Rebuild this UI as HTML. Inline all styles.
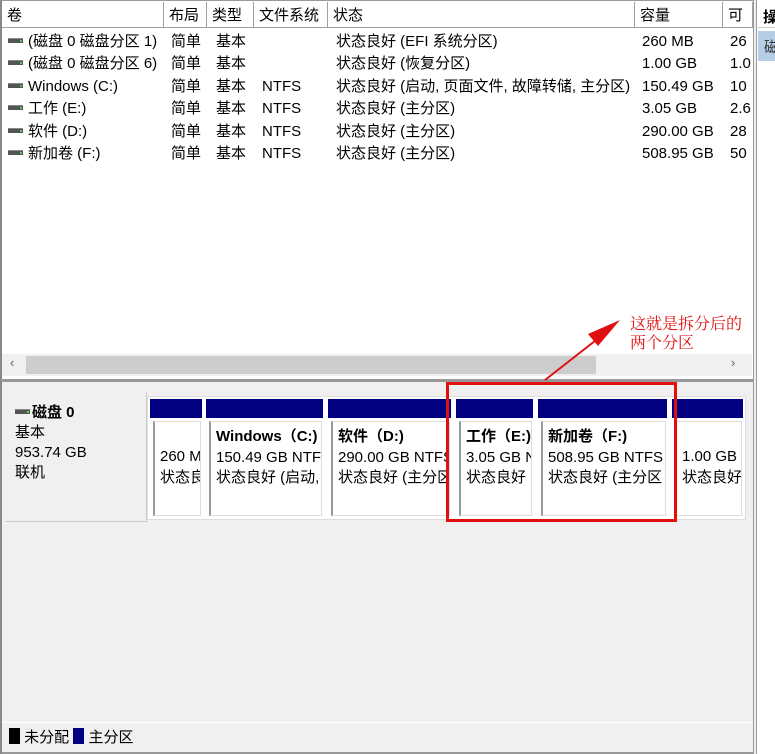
<!DOCTYPE html>
<html><head><meta charset="utf-8"><style>
*{margin:0;padding:0;box-sizing:border-box}
body{width:775px;height:754px;overflow:hidden;background:#fff;font-family:"Liberation Sans","Noto Sans CJK SC",sans-serif;font-size:15px;color:#000;position:relative}
.a{position:absolute;white-space:nowrap;overflow:hidden}
.hd{position:absolute;top:2px;height:26px;background:#fff;border-right:1px solid #a0a0a0;border-bottom:1px solid #a0a0a0;padding:4px 0 0 5px;line-height:20px}
.ic{display:inline-block;width:15px;height:5px;background:#555;border-top:1px solid #888;margin-right:5px;vertical-align:3px;position:relative}
.ic:after{content:"";position:absolute;right:1px;top:1px;width:2px;height:2px;background:#5c5}
.bar{position:absolute;top:399px;height:19px;background:#000080}
.pb{position:absolute;top:421px;height:95px;border-left:2px solid #999;border-top:1px solid #ddd;border-right:1px solid #ddd;border-bottom:1px solid #ddd;background:#fff;padding:5px 0 0 5px;line-height:20.5px;overflow:hidden;white-space:nowrap}
b{font-weight:bold}
</style></head><body>
<div class="a" style="left:0;top:0;width:753px;height:381px;border-left:2px solid #888;border-top:1px solid #999"></div>
<div class="hd" style="left:2px;width:162px">卷</div>
<div class="hd" style="left:164px;width:43px">布局</div>
<div class="hd" style="left:207px;width:47px">类型</div>
<div class="hd" style="left:254px;width:74px">文件系统</div>
<div class="hd" style="left:328px;width:307px">状态</div>
<div class="hd" style="left:635px;width:88px">容量</div>
<div class="hd" style="left:723px;width:30px;overflow:hidden">可用</div>

<div class="a" style="left:8px;top:31px;line-height:22.4px">
<div><span class="ic"></span>(磁盘 0 磁盘分区 1)</div>
<div><span class="ic"></span>(磁盘 0 磁盘分区 6)</div>
<div><span class="ic"></span>Windows (C:)</div>
<div><span class="ic"></span>工作 (E:)</div>
<div><span class="ic"></span>软件 (D:)</div>
<div><span class="ic"></span>新加卷 (F:)</div></div>
<div class="a" style="left:171px;top:31px;line-height:22.4px">简单<br>简单<br>简单<br>简单<br>简单<br>简单</div>
<div class="a" style="left:216px;top:31px;line-height:22.4px">基本<br>基本<br>基本<br>基本<br>基本<br>基本</div>
<div class="a" style="left:262px;top:31px;line-height:22.4px"><br><br>NTFS<br>NTFS<br>NTFS<br>NTFS</div>
<div class="a" style="left:336px;top:31px;line-height:22.4px">状态良好 (EFI 系统分区)<br>状态良好 (恢复分区)<br>状态良好 (启动, 页面文件, 故障转储, 主分区)<br>状态良好 (主分区)<br>状态良好 (主分区)<br>状态良好 (主分区)</div>
<div class="a" style="left:642px;top:31px;line-height:22.4px">260 MB<br>1.00 GB<br>150.49 GB<br>3.05 GB<br>290.00 GB<br>508.95 GB</div>
<div class="a" style="left:730px;top:31px;width:22px;line-height:22.4px">26<br>1.0<br>10<br>2.6<br>28<br>50</div>

<div class="a" style="left:2px;top:354px;width:750px;height:22px;background:#f0f0f0"></div>
<div class="a" style="left:26px;top:356px;height:18px;background:#cdcdcd;width:570px"></div>
<div class="a" style="left:10px;top:355px;color:#666;font-size:13px">‹</div>
<div class="a" style="left:731px;top:355px;color:#666;font-size:13px">›</div>

<div class="a" style="left:0;top:379px;width:753px;height:375px;background:#f0f0f0;border-left:2px solid #888;border-top:3px solid #999"></div>
<div class="a" style="left:5px;top:392px;width:142px;height:130px;background:#f0f0f0;border-right:1px solid #ccc;border-bottom:1px solid #ccc;padding:11px 0 0 10px;line-height:20px">
<div style="font-weight:bold"><span class="ic" style="margin-right:2px"></span>磁盘 0</div><div>基本</div><div>953.74 GB</div><div>联机</div></div>
<div class="a" style="left:147px;top:396px;width:599px;height:124px;background:#fff;border:1px solid #ddd"></div>

<div class="bar" style="left:150px;width:52px"></div>
<div class="bar" style="left:206px;width:117px"></div>
<div class="bar" style="left:328px;width:123px"></div>
<div class="bar" style="left:456px;width:77px"></div>
<div class="bar" style="left:538px;width:129px"></div>
<div class="bar" style="left:672px;width:71px"></div>

<div class="pb" style="left:153px;width:48px;padding-top:25px">260 MB<br>状态良好</div>
<div class="pb" style="left:209px;width:113px"><b>Windows（C:)</b><br>150.49 GB NTFS<br>状态良好 (启动,</div>
<div class="pb" style="left:331px;width:119px"><b>软件（D:)</b><br>290.00 GB NTFS<br>状态良好 (主分区</div>
<div class="pb" style="left:459px;width:73px"><b>工作（E:)</b><br>3.05 GB NTFS<br>状态良好</div>
<div class="pb" style="left:541px;width:125px"><b>新加卷（F:)</b><br>508.95 GB NTFS<br>状态良好 (主分区</div>
<div class="pb" style="left:675px;width:67px;padding-top:25px">1.00 GB<br>状态良好</div>

<div class="a" style="left:2px;top:722px;width:751px;height:32px;border-top:1px solid #fff;border-bottom:2px solid #999;background:#f0f0f0;padding:5px 0 0 7px;line-height:20px">
<span style="display:inline-block;width:11px;height:16px;background:#000;vertical-align:-2px"></span> 未分配 <span style="display:inline-block;width:11px;height:16px;background:#000080;vertical-align:-2px"></span> 主分区</div>

<div class="a" style="left:753px;top:0;width:4px;height:754px;background:#f0f0f0;border-left:1px solid #999;border-right:1px solid #999"></div>
<div class="a" style="left:757px;top:0;width:18px;height:754px;background:#fff"></div>
<div class="a" style="left:758px;top:2px;width:17px;height:26px;background:#fff;border-bottom:1px solid #ccc;padding:4px 0 0 5px;font-weight:bold">操作</div>
<div class="a" style="left:758px;top:31px;width:17px;height:30px;background:#b5cde6;padding:5px 0 0 6px;color:#333">磁盘</div>

<div class="a" style="left:446px;top:382px;width:231px;height:140px;border:3px solid #e01010"></div>
<svg class="a" style="left:0;top:0" width="775" height="754"><line x1="545" y1="380" x2="600" y2="337" stroke="#e01010" stroke-width="2"/><polygon points="620,320 588,334 598,346" fill="#e01010"/></svg>
<div class="a" style="left:630px;top:313px;color:#e01010;font-family:'Noto Serif CJK SC','Liberation Serif',serif;font-size:16px;line-height:19px">这就是拆分后的<br>两个分区</div>
</body></html>
